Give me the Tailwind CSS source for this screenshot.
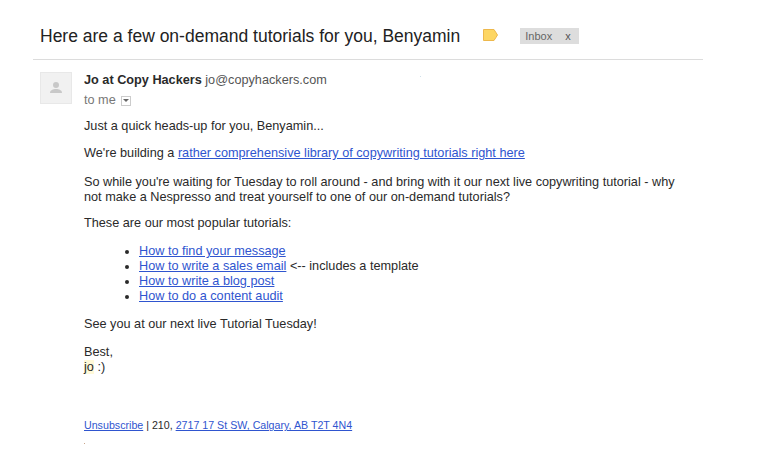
<!DOCTYPE html>
<html lang="en">
<head>
  <meta charset="UTF-8" />
  <title>Here are a few on-demand tutorials for you, Benyamin</title>
  <script src="https://cdn.jsdelivr.net/npm/@tailwindcss/browser@4"></script>
</head>
<body class="bg-white font-['Liberation_Sans',Arial,sans-serif] overflow-hidden">
  <div class="w-[759px] h-[462px] overflow-hidden">
    <!-- subject -->
    <div class="ml-[33px] w-[670px] h-[60px] border-b border-[#dcdcdc] pl-[7px] pt-[25px] flex items-start">
      <h1 class="text-[17.5px] leading-[22px] text-[#222]">Here are a few on-demand tutorials for you, Benyamin</h1>
      <svg class="ml-[23px] mt-[4px]" width="15" height="12" viewBox="0 0 15 12">
        <path d="M.5.5H11L14.5 6 11 11.5H.5Z" fill="#fdd663" stroke="#edb84c"/>
      </svg>
      <div class="ml-[22px] mt-[3px] w-[59px] h-[16px] bg-[#dddddd] flex items-center text-[11px] text-[#666] pl-[5px]">
        <span>Inbox</span><span class="ml-[13px] text-[#555]">x</span>
      </div>
    </div>

    <div class="flex pl-[40px] pt-[12px]">
      <!-- avatar -->
      <div class="w-[32px] h-[32px] bg-[#f1f1f1] border border-[#e8e8e8] flex items-center justify-center">
        <svg width="14" height="16" viewBox="0 0 14 16">
          <circle cx="7" cy="5" r="3" fill="#c8c8c8"/>
          <path d="M1 13c0-3 3-4 6-4s6 1 6 4z" fill="#c8c8c8"/>
        </svg>
      </div>

      <div class="ml-[12px] text-[12.7px] leading-[15px] text-[#2a2a2a]">
        <div class="h-[15px] mt-[1px] flex">
          <div class="whitespace-nowrap w-[243px] overflow-hidden"><b>Jo at Copy Hackers</b> <span class="text-[#555]">jo@copyhackers.com</span></div>
          <div class="ml-[93px] mt-[3px] w-[1px] h-[1px] bg-[#cfe0ea]"></div>
        </div>
        <div class="mt-[5px] h-[15px] flex items-center text-[#777]">
          to me
          <span class="ml-[5px] w-[10px] h-[10px] border border-[#ccc] flex items-center justify-center">
            <span class="border-x-[3px] border-t-[3px] border-x-transparent border-t-[#666]"></span>
          </span>
        </div>

        <p class="mt-[11px]">Just a quick heads-up for you, Benyamin...</p>
        <p class="mt-[12px]"><span>We're building a </span><a href="#" class="text-[#2f55cf] underline">rather comprehensive library of copywriting tutorials right here</a></p>
        <p class="mt-[14px] w-[610px]">So while you're waiting for Tuesday to roll around - and bring with it our next live copywriting tutorial - why not make a Nespresso and treat yourself to one of our on-demand tutorials?</p>
        <p class="mt-[11px]">These are our most popular tutorials:</p>

        <ul class="mt-[13px] ml-[55px] list-disc list-outside">
          <li><a href="#" class="text-[#2f55cf] underline">How to find your message</a></li>
          <li><a href="#" class="text-[#2f55cf] underline">How to write a sales email</a> &lt;-- includes a template</li>
          <li><a href="#" class="text-[#2f55cf] underline">How to write a blog post</a></li>
          <li><a href="#" class="text-[#2f55cf] underline">How to do a content audit</a></li>
        </ul>

        <p class="mt-[13px]">See you at our next live Tutorial Tuesday!</p>
        <p class="mt-[13px]">Best,<br /><span class="bg-[#fff9d8]">jo</span> :)</p>

        <p class="mt-[43px] text-[10.66px]"><a href="#" class="text-[#2f55cf] underline">Unsubscribe</a> | 210, <a href="#" class="text-[#2f55cf] underline">2717 17 St SW, Calgary, AB T2T 4N4</a></p>
        <div class="mt-[10px] w-[1px] h-[1px] bg-[#c9a58a]"></div>
      </div>
    </div>
  </div>
</body>
</html>
